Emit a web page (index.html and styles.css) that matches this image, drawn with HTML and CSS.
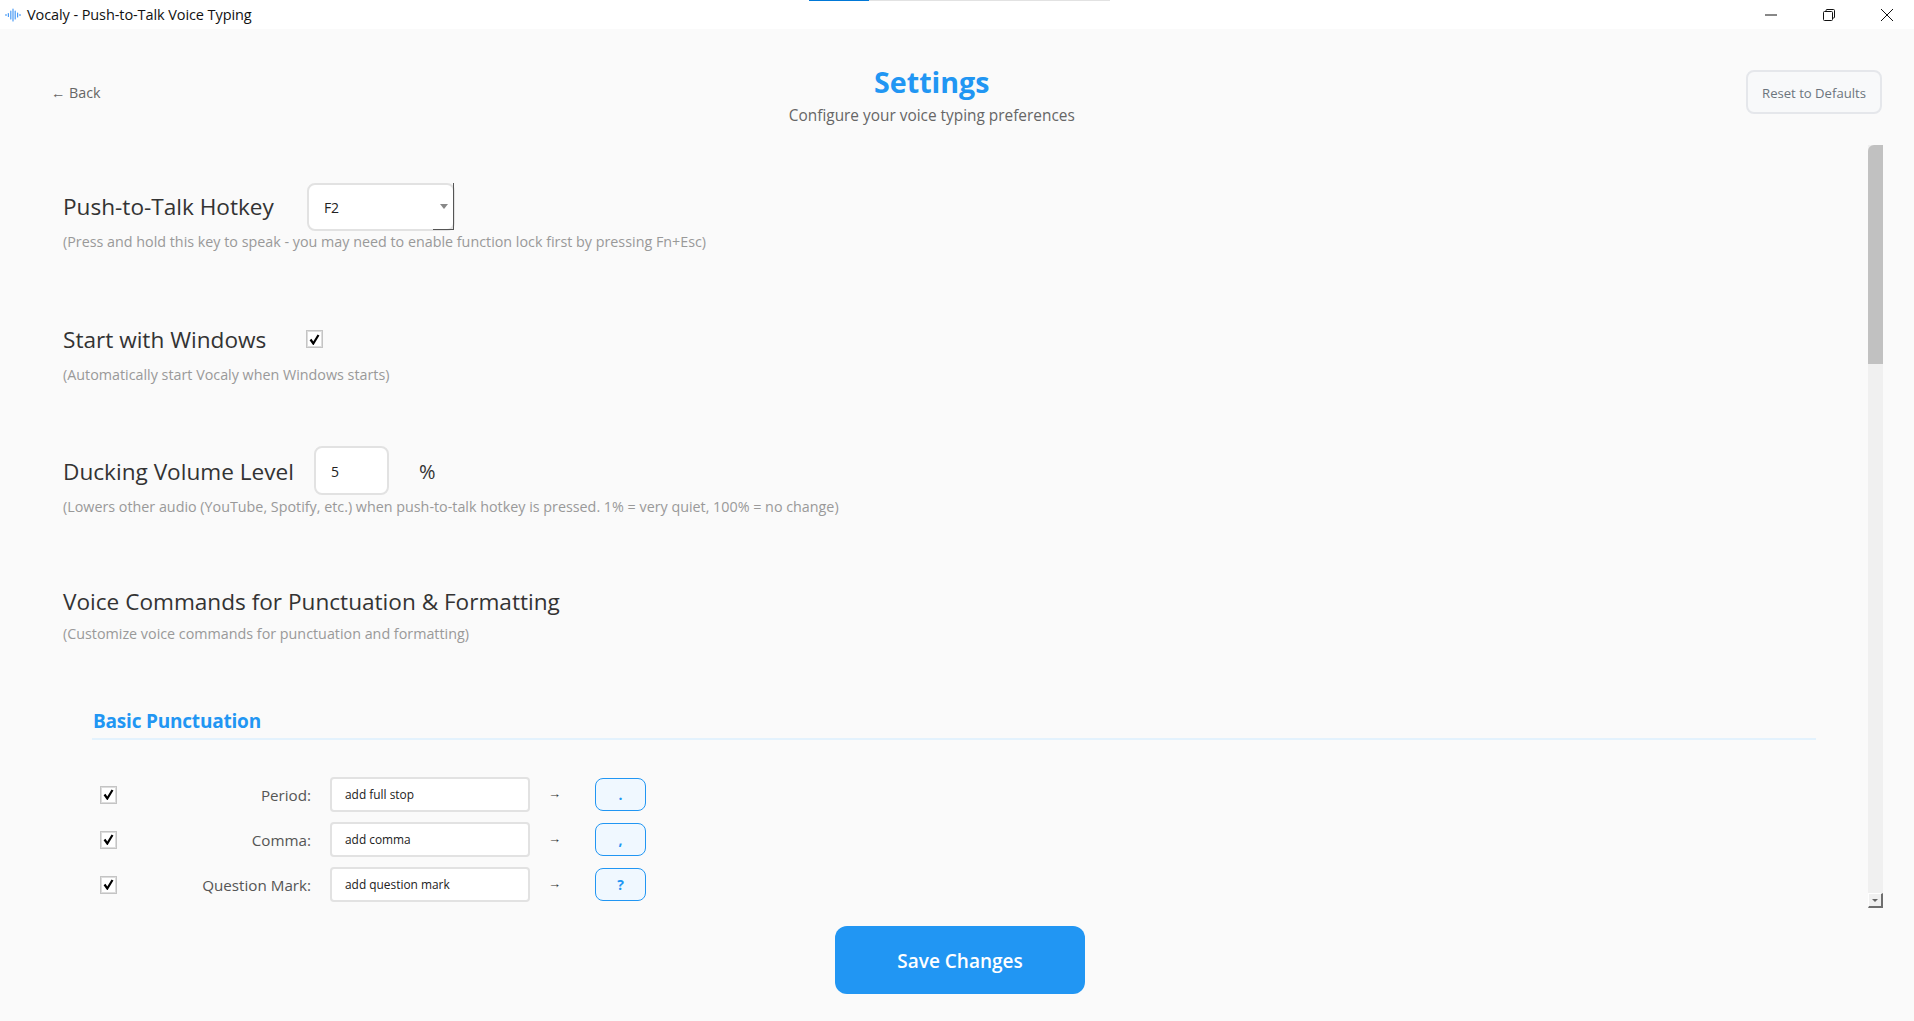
FILE: index.html
```html
<!DOCTYPE html>
<html lang="en">
<head>
<meta charset="utf-8">
<title>Vocaly - Push-to-Talk Voice Typing</title>
<link rel="stylesheet" href="styles.css">
</head>
<body>
<div class="app">
  <div class="titlebar">
    <div class="title-left">
      <svg class="logo" width="16" height="14" viewBox="0 0 16 14"><g stroke="#4a9bf5" stroke-width="1.2" stroke-linecap="round"><path d="M1 6.500v1"/><path d="M3.400 5.500v3"/><path d="M5.800 3v8"/><path d="M8 1v12"/><path d="M10.200 3v8"/><path d="M12.600 5v4"/><path d="M15 6.500v1"/></g></svg>
      <span class="title-text">Vocaly - Push-to-Talk Voice Typing</span>
    </div>
    <div class="load-bar"><div class="load-fill"></div></div>
    <div class="win-controls">
      <svg width="14" height="14" viewBox="0 0 14 14"><path d="M1 7h12" stroke="#111" stroke-width="1"/></svg>
      <svg width="14" height="14" viewBox="0 0 14 14" fill="none" stroke="#111" stroke-width="1"><rect x="1.500" y="3.500" width="9" height="9" rx="1"/><path d="M4 3.500V2.500a1 1 0 0 1 1-1h6.500a1 1 0 0 1 1 1V9a1 1 0 0 1-1 1h-1"/></svg>
      <svg width="14" height="14" viewBox="0 0 14 14"><path d="M1 1l12 12M13 1L1 13" stroke="#111" stroke-width="1"/></svg>
    </div>
  </div>

  <header class="page-header">
    <a class="back">← Back</a>
    <div class="heading">
      <h1>Settings</h1>
      <p>Configure your voice typing preferences</p>
    </div>
    <button class="reset">Reset to Defaults</button>
  </header>

  <div class="scroller">
    <main class="content">
      <section class="setting s-hotkey">
        <div class="setting-row">
          <span class="setting-label">Push-to-Talk Hotkey</span>
          <div class="select"><span>F2</span><i class="caret"></i></div>
        </div>
        <p class="hint">(Press and hold this key to speak - you may need to enable function lock first by pressing Fn+Esc)</p>
      </section>

      <section class="setting s-start">
        <div class="setting-row">
          <span class="setting-label">Start with Windows</span>
          <span class="check"><svg width="11" height="11" viewBox="0 0 11 11"><path d="M1.500 5.500l2.800 4L9.500 1" fill="none" stroke="#000" stroke-width="2.200"/></svg></span>
        </div>
        <p class="hint">(Automatically start Vocaly when Windows starts)</p>
      </section>

      <section class="setting s-duck">
        <div class="setting-row">
          <span class="setting-label">Ducking Volume Level</span>
          <div class="number-box">5</div>
          <span class="unit">%</span>
        </div>
        <p class="hint">(Lowers other audio (YouTube, Spotify, etc.) when push-to-talk hotkey is pressed. 1% = very quiet, 100% = no change)</p>
      </section>

      <section class="setting s-voice">
        <div class="setting-label">Voice Commands for Punctuation &amp; Formatting</div>
        <p class="hint">(Customize voice commands for punctuation and formatting)</p>
      </section>

      <section class="group">
        <h2>Basic Punctuation</h2>
        <div class="cmd">
          <span class="check"><svg width="11" height="11" viewBox="0 0 11 11"><path d="M1.500 5.500l2.800 4L9.500 1" fill="none" stroke="#000" stroke-width="2.200"/></svg></span>
          <span class="cmd-label">Period:</span>
          <div class="cmd-input">add full stop</div>
          <span class="arrow">→</span>
          <span class="badge">.</span>
        </div>
        <div class="cmd">
          <span class="check"><svg width="11" height="11" viewBox="0 0 11 11"><path d="M1.500 5.500l2.800 4L9.500 1" fill="none" stroke="#000" stroke-width="2.200"/></svg></span>
          <span class="cmd-label">Comma:</span>
          <div class="cmd-input">add comma</div>
          <span class="arrow">→</span>
          <span class="badge">,</span>
        </div>
        <div class="cmd">
          <span class="check"><svg width="11" height="11" viewBox="0 0 11 11"><path d="M1.500 5.500l2.800 4L9.500 1" fill="none" stroke="#000" stroke-width="2.200"/></svg></span>
          <span class="cmd-label">Question Mark:</span>
          <div class="cmd-input">add question mark</div>
          <span class="arrow">→</span>
          <span class="badge">?</span>
        </div>
      </section>
    </main>
    <div class="scrollbar">
      <div class="thumb"></div>
      <div class="track"></div>
      <div class="sb-down"><i></i></div>
    </div>
  </div>

  <footer class="footer">
    <button class="save">Save Changes</button>
  </footer>
</div>
</body>
</html>
```
FILE: styles.css
```css
* { box-sizing: border-box; }
html, body { margin: 0; height: 100%; }
body {
  background: #fafafa;
  font-family: "Open Sans", "Noto Sans", "Liberation Sans", sans-serif;
  color: #333;
  overflow: hidden;
}
.app { height: 1021px; display: flex; flex-direction: column; }

.titlebar {
  position: relative;
  flex: 0 0 29px;
  height: 29px;
  background: #fff;
  display: flex;
  justify-content: space-between;
  align-items: center;
}
.title-left { display: flex; align-items: center; padding-left: 5px; gap: 6px; }
.logo { display: block; }
.title-text { font-size: 14.500px; color: #111; letter-spacing: -0.09px; }
.load-bar {
  position: absolute;
  left: 809px;
  top: 0;
  width: 301px;
  height: 1px;
  background: #e2e2e2;
}
.load-fill { width: 60px; height: 1px; background: #0078d7; }
.win-controls { display: flex; align-items: center; gap: 44px; padding-right: 20px; }
.win-controls svg { display: block; }

.page-header {
  flex: 0 0 116px;
  height: 116px;
  display: flex;
  align-items: flex-start;
  justify-content: space-between;
  padding: 41px 32px 0 51px;
}
.back { font-size: 14.300px; color: #666; line-height: 44px; height: 44px; padding-top: 1px; }
.heading { text-align: center; margin-top: -11px; margin-left: 17px; }
.heading h1 {
  margin: 0;
  font-size: 28.600px;
  line-height: 46px;
  font-weight: 700;
  color: #2196f3;
}
.heading p { margin: 0; font-size: 15.400px; line-height: 21px; color: #666; }
.reset {
  width: 136px;
  height: 44px;
  border: 2px solid #e5e7eb;
  border-radius: 8px;
  background: #f8f9fa;
  color: #6c757d;
  font: inherit;
  font-size: 13.100px;
  padding: 1px 0 0;
}

.scroller {
  flex: 0 0 767px;
  height: 767px;
  display: flex;
  overflow: hidden;
  padding-right: 31px;
}
.content { flex: 1; padding: 0 50px 0 63px; overflow: hidden; min-width: 0; }

.setting-row { display: flex; align-items: center; }
.setting-label { font-size: 22.600px; line-height: 30px; color: #333; white-space: nowrap; }
.hint { margin: 0; font-size: 14.320px; line-height: 20px; color: #999; white-space: nowrap; }

.s-hotkey { padding-top: 38px; }
.s-hotkey .setting-row { height: 48px; gap: 33px; }
.s-hotkey .hint { margin-top: 1px; }
.s-start { margin-top: 72px; }
.s-start .setting-row { height: 32px; gap: 40px; }
.s-start .check { margin-top: -2px; }
.s-start .hint { margin-top: 9px; }
.s-duck { margin-top: 61px; }
.s-duck .setting-row { height: 49px; gap: 20px; }
.s-duck .setting-label { margin-top: 2px; }
.s-duck .hint { margin-top: 2px; }
.s-voice { margin-top: 70px; }
.s-voice .hint { margin-top: 7px; }

.select {
  position: relative;
  width: 148px;
  height: 48px;
  border: 2px solid #e2e2e2;
  border-radius: 8px;
  background: #fff;
  display: flex;
  align-items: center;
  padding-left: 15px;
  font-size: 14px;
  color: #222;
}
.select::after {
  content: "";
  position: absolute;
  right: -1px;
  bottom: -1px;
  width: 20px;
  height: 46px;
  border-right: 1px solid #555;
  border-bottom: 1px solid #555;
  pointer-events: none;
}
.caret {
  position: absolute;
  right: 5px;
  top: 19px;
  width: 0;
  height: 0;
  border-left: 4px solid transparent;
  border-right: 4px solid transparent;
  border-top: 5px solid #888;
}
.check {
  flex: none;
  width: 17px;
  height: 18px;
  border: 1px solid #c4c4c4;
  box-shadow: inset 0 0 0 1px #ddd;
  background: #fff;
  display: flex;
  align-items: center;
  justify-content: center;
}
.check svg { display: block; }
.number-box {
  width: 75px;
  height: 49px;
  border: 2px solid #e2e2e2;
  border-radius: 8px;
  background: #fff;
  display: flex;
  align-items: center;
  padding: 2px 0 0 15px;
  font-size: 14px;
  color: #222;
}
.unit { margin: 2px 0 0 10px; font-size: 20px; color: #333; }

.group { margin: 64px 2px 0 29px; }
.group h2 {
  margin: 0 0 37px;
  padding: 0 0 4px 1px;
  font-size: 19px;
  line-height: 26px;
  font-weight: 700;
  letter-spacing: -0.2px;
  color: #2196f3;
  border-bottom: 2px solid #e3f2fd;
}
.cmd { display: flex; align-items: center; height: 35px; margin-bottom: 10px; padding-left: 8px; }
.cmd-label {
  width: 194px;
  margin-right: 19px;
  text-align: right;
  font-size: 15.200px;
  color: #555;
  white-space: nowrap;
}
.cmd-input {
  width: 200px;
  height: 35px;
  border: 2px solid #e2e2e2;
  border-radius: 4px;
  background: #fff;
  display: flex;
  align-items: center;
  padding: 0 0 2px 13px;
  font-size: 11.900px;
  color: #222;
}
.arrow { width: 65px; padding: 0 16px 3px 0; text-align: center; font-size: 13px; line-height: 14px; color: #333; }
.badge {
  width: 51px;
  height: 33px;
  border: 1px solid #2196f3;
  border-radius: 8px;
  background: #f0f8ff;
  display: flex;
  align-items: center;
  justify-content: center;
  font-size: 14px;
  font-weight: 700;
  color: #2196f3;
}

.scrollbar { flex: 0 0 15px; width: 15px; display: flex; flex-direction: column; height: 763px; background: #f0f0f0; }
.thumb { height: 219px; background: #c1c1c1; border-radius: 6px 0 0 0; }
.track { flex: 1; }
.sb-down {
  height: 15px;
  background: #f0f0f0;
  border-top: 1px solid #fff;
  border-left: 1px solid #fff;
  border-right: 2px solid #6e6e6e;
  border-bottom: 2px solid #6e6e6e;
  display: flex;
  align-items: center;
  justify-content: center;
}
.sb-down i {
  width: 0;
  height: 0;
  border-left: 3px solid transparent;
  border-right: 3px solid transparent;
  border-top: 3px solid #666;
}

.footer { flex: 1; display: flex; justify-content: center; padding: 14px 0 0 6px; }
.save {
  width: 250px;
  height: 68px;
  border: none;
  border-radius: 12px;
  background: #2196f3;
  color: #fff;
  font: inherit;
  font-size: 19px;
  font-weight: 600;
  padding: 2px 0 0;
}
```
